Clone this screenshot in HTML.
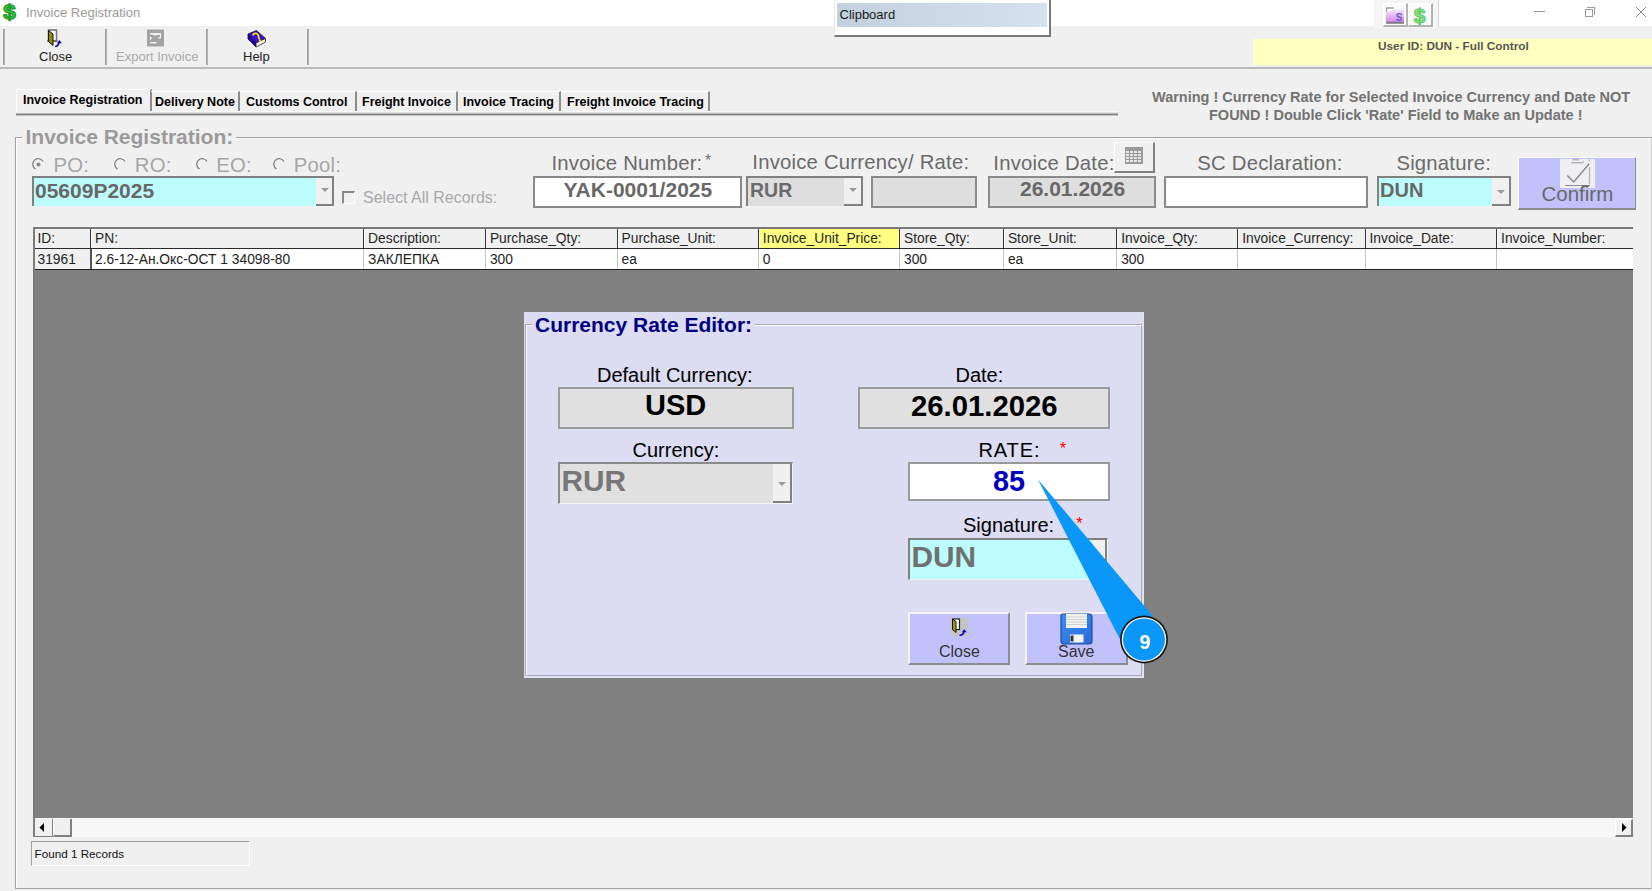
<!DOCTYPE html>
<html><head><meta charset="utf-8">
<style>
*{box-sizing:border-box;margin:0;padding:0}
html,body{width:1652px;height:891px;overflow:hidden;background:#f0f0f0;font-family:"Liberation Sans",sans-serif;position:relative}
.a{position:absolute}
.t{position:absolute;white-space:nowrap;line-height:1}
.sep{position:absolute;width:2px;background:#b0b0b0;border-left:1px solid #a0a0a0}
.tab{position:absolute;top:91px;height:20px;border-top:1px solid #fff;border-right:2px solid #8c8c8c}
.tabt{position:absolute;white-space:nowrap;line-height:1;font-size:12.5px;font-weight:bold;color:#000}
.lbl{position:absolute;white-space:nowrap;line-height:1;font-size:20.3px;color:#6a6a6a;letter-spacing:0.22px}
.box{position:absolute;border:2px solid #8a8a8a}
.gh{position:absolute;top:229px;height:20px;border-right:2px solid #6a6a6a;background:#f0f0f0}
.ght{position:absolute;white-space:nowrap;line-height:1;font-size:13.8px;color:#262626;top:231.5px}
.gdt{position:absolute;white-space:nowrap;line-height:1;font-size:13.8px;color:#222;top:252.5px}
.dl{position:absolute;white-space:nowrap;line-height:1;font-size:20px;color:#000}
.dbox{position:absolute;border:2px solid #9a9a9a;background:#e0e0e0}
.btn{position:absolute;background:#c1c1fc;border-top:2px solid #f4f4f4;border-left:2px solid #f4f4f4;border-right:2px solid #8c8c8c;border-bottom:2px solid #8c8c8c}
</style></head>
<body>
<!-- title bar -->
<div class="a" style="left:0;top:0;width:1652px;height:26px;background:#fff"></div>
<svg class="a" style="left:0;top:0" width="22" height="24" viewBox="0 0 22 24"><text x="9.4" y="18.6" font-family="Liberation Sans" font-weight="bold" font-size="20" fill="#3ad23a" stroke="#1f9a2a" stroke-width="1.3" text-anchor="middle" transform="translate(9.4 0) scale(1.12 1) translate(-9.4 0)">$</text></svg>
<div class="t" style="left:26px;top:6px;font-size:13px;color:#9a9a9a">Invoice Registration</div>


<!-- clipboard popup -->
<div class="a" style="left:834px;top:0;width:217px;height:37px;background:#fff;border-left:1px solid #e8e8e8;border-right:2px solid #7a7a7a;border-bottom:2px solid #7a7a7a"></div>
<div class="a" style="left:837px;top:3px;width:210px;height:24px;background:linear-gradient(90deg,#c3d1df,#d4e2f0)"></div>
<div class="t" style="left:839.5px;top:8px;font-size:13px;color:#1a1a1a">Clipboard</div>
<!-- top right tool icons -->
<div class="a" style="left:1374px;top:0;width:65px;height:28px;background:#f5f5f5;border-right:1px solid #d8d8d8"></div>
<div class="a" style="left:1383px;top:3px;width:25px;height:24px;background:#fbfbfb;border-top:1px solid #fff;border-left:1px solid #fff;border-right:2px solid #b4b4b4;border-bottom:2px solid #b4b4b4"></div>
<div class="a" style="left:1408px;top:3px;width:25px;height:24px;background:#fbfbfb;border-top:1px solid #fff;border-left:1px solid #fff;border-right:2px solid #b4b4b4;border-bottom:2px solid #b4b4b4"></div>
<svg class="a" style="left:1385px;top:5px" width="20" height="20" viewBox="0 0 20 20"><defs><linearGradient id="fg" x1="0" y1="0" x2="0" y2="1"><stop offset="0" stop-color="#f4e4fa"/><stop offset="0.75" stop-color="#dc98ec"/><stop offset="0.85" stop-color="#c080d0"/><stop offset="0.86" stop-color="#8a7a8a"/><stop offset="1" stop-color="#7a7a7a"/></linearGradient></defs><path d="M1.5 3H8.5" stroke="#8a8a8a" stroke-width="1.3"/><path d="M1.5 2.5V7" stroke="#9a9a9a" stroke-width="1.2"/><path d="M1 6.5H7L8 4.5H19V18.7H1Z" fill="url(#fg)"/><text x="14" y="15.5" font-family="Liberation Sans" font-weight="bold" font-size="10" fill="#6a5cc8" text-anchor="middle">S</text></svg>
<svg class="a" style="left:1409px;top:3px" width="22" height="24" viewBox="0 0 22 24"><text x="10.5" y="19.6" font-family="Liberation Sans" font-weight="bold" font-size="21" fill="#8ae68a" stroke="#5ec45e" stroke-width="1" text-anchor="middle">$</text></svg>
<!-- window controls -->
<div class="a" style="left:1534px;top:11px;width:11px;height:1px;background:#999"></div>
<div class="a" style="left:1585px;top:9px;width:8px;height:8px;border:1px solid #9a9a9a"></div>
<div class="a" style="left:1587px;top:7px;width:8px;height:8px;border-top:1px solid #9a9a9a;border-right:1px solid #9a9a9a"></div>
<svg class="a" style="left:1635px;top:6px" width="12" height="12" viewBox="0 0 12 12"><path d="M1 1L11 11M11 1L1 11" stroke="#8a8a8a" stroke-width="1"/></svg>
<!-- toolbar -->
<div class="a" style="left:0;top:67px;width:1652px;height:2px;background:#bababa"></div>
<div class="sep" style="left:3px;top:29px;height:36px"></div>
<div class="sep" style="left:105px;top:29px;height:36px"></div>
<div class="sep" style="left:206px;top:29px;height:36px"></div>
<div class="sep" style="left:307px;top:29px;height:36px"></div>
<div class="t" style="left:39px;top:50px;font-size:13px;color:#222">Close</div>
<div class="t" style="left:116px;top:50px;font-size:13px;color:#a8a8a8">Export Invoice</div>
<div class="t" style="left:243px;top:50px;font-size:13px;color:#222">Help</div>


<!-- toolbar icons -->
<svg class="a" style="left:44px;top:27px" width="22" height="22" viewBox="44 27 22 22">
<rect x="48.5" y="30" width="8" height="11" fill="#fff" stroke="#7a7a7a" stroke-width="1.6"/>
<path d="M47 41H57.5" stroke="#555" stroke-width="1.2"/>
<path d="M48.5 30.5L53 34V45.5L48.5 41.5Z" fill="#8f8c00" stroke="#111" stroke-width="1"/>
<path d="M55.2 46.5Q58 46.5 59 43" fill="none" stroke="#0000a8" stroke-width="1.4"/>
<path d="M57 43.3L59.5 40L61.8 43.3Z" fill="#0000a8"/>
</svg>
<svg class="a" style="left:146px;top:29px" width="19" height="19" viewBox="146 29 19 19">
<rect x="147" y="29.5" width="17" height="17" fill="#a3a3a3"/>
<path d="M150 33.6H161M160.5 33.6V37.8H158M150 33.6L156 35M161 33.6L155.5 35" stroke="#f2f2f2" stroke-width="1.2" fill="none"/>
<path d="M150 36V40.5L152 38.2Z" fill="#f2f2f2"/>
<rect x="150" y="42" width="6.5" height="1.4" fill="#f2f2f2"/>
</svg>
<svg class="a" style="left:246px;top:29px" width="22" height="19" viewBox="246 29 22 19">
<path d="M248 34L256 43L256 47L248 39Z" fill="#2a00c0" stroke="#111" stroke-width="0.8"/>
<path d="M248 34L256.5 30.5L265.5 38.5L256 43Z" fill="#3a10d0" stroke="#111" stroke-width="0.8"/>
<path d="M256 43L265.5 38.5L265.5 42L256 47Z" fill="#fafafa" stroke="#222" stroke-width="0.8"/>
<path d="M253 35.5Q253.5 33 256.5 33.5Q259 34.5 258.5 37L259.5 39.5" fill="none" stroke="#f5e000" stroke-width="1.8"/>
<circle cx="260" cy="40.8" r="1.2" fill="#f5e000"/>
</svg>
<!-- user id -->
<div class="a" style="left:1252.5px;top:39.3px;width:400px;height:25.7px;background:#ffffc0"></div>
<div class="t" style="left:1378px;top:41px;font-size:11.8px;font-weight:bold;color:#555">User ID: DUN - Full Control</div>


<div class="a" style="left:16px;top:111px;width:1102px;height:1px;background:#fafafa"></div><div class="a" style="left:16px;top:112px;width:1102px;height:1px;background:#e4e4e4"></div>
<div class="a" style="left:16px;top:113px;width:1102px;height:1px;background:#b8b8b8"></div>
<div class="a" style="left:16px;top:114px;width:1102px;height:1px;background:#808080"></div><div class="a" style="left:16px;top:115px;width:1102px;height:1px;background:#c4c4c4"></div>
<div class="a" style="left:16px;top:89px;width:136px;height:22px;border-left:1px solid #fff;border-top:1px solid #fff;border-right:2px solid #8c8c8c;background:#f0f0f0"></div><div class="a" style="left:16px;top:111px;width:136px;height:2px;background:#f0f0f0;border-left:1px solid #fff"></div>
<div class="tabt" style="left:23px;top:93.7px">Invoice Registration</div>
<div class="tab" style="left:151px;width:89px"></div>
<div class="tabt" style="left:155px;top:95.7px">Delivery Note</div>
<div class="tab" style="left:240px;width:117px"></div>
<div class="tabt" style="left:246px;top:95.7px">Customs Control</div>
<div class="tab" style="left:357px;width:101px"></div>
<div class="tabt" style="left:362px;top:95.7px">Freight Invoice</div>
<div class="tab" style="left:458px;width:103px"></div>
<div class="tabt" style="left:463px;top:95.7px">Invoice Tracing</div>
<div class="tab" style="left:561px;width:149px"></div>
<div class="tabt" style="left:567px;top:95.7px">Freight Invoice Tracing</div>

<div class="t" style="left:1152px;top:90px;font-size:14.5px;font-weight:bold;color:#727272">Warning ! Currency Rate for Selected Invoice Currency and Date NOT</div>
<div class="t" style="left:1209px;top:107.5px;font-size:14.5px;font-weight:bold;color:#727272">FOUND ! Double Click 'Rate' Field to Make an Update !</div>


<!-- group frame -->
<div class="a" style="left:15px;top:137px;width:1637px;height:752px;border-left:1px solid #a0a0a0;border-top:1px solid #a0a0a0;border-bottom:1px solid #a0a0a0"></div>
<div class="a" style="left:16px;top:138px;width:1636px;height:750px;border-left:1px solid #fff;border-top:1px solid #fff"></div>
<div class="a" style="left:1651px;top:138px;width:1px;height:751px;background:#d0d0d0"></div>
<div class="a" style="left:22px;top:128px;width:214px;height:20px;background:#f0f0f0"></div>
<div class="t" style="left:25.5px;top:126.4px;font-size:21px;font-weight:bold;color:#9a9a9a">Invoice Registration:</div>

<!-- radios -->
<svg class="a" style="left:32px;top:158px" width="13" height="13" viewBox="0 0 13 13"><path d="M11 3.5A5.5 5.5 0 1 0 3.5 11" fill="none" stroke="#777" stroke-width="1.2"/><circle cx="6.5" cy="6.5" r="2" fill="#888"/></svg>
<div class="lbl" style="left:53.5px;top:155.4px;color:#a6a6a6">PO:</div>
<svg class="a" style="left:114px;top:158px" width="13" height="13" viewBox="0 0 13 13"><path d="M11 3.5A5.5 5.5 0 1 0 3.5 11" fill="none" stroke="#777" stroke-width="1.2"/></svg>
<div class="lbl" style="left:134.8px;top:155.4px;color:#a6a6a6">RO:</div>
<svg class="a" style="left:196px;top:158px" width="13" height="13" viewBox="0 0 13 13"><path d="M11 3.5A5.5 5.5 0 1 0 3.5 11" fill="none" stroke="#777" stroke-width="1.2"/></svg>
<div class="lbl" style="left:216.2px;top:155.4px;color:#a6a6a6">EO:</div>
<svg class="a" style="left:273px;top:158px" width="13" height="13" viewBox="0 0 13 13"><path d="M11 3.5A5.5 5.5 0 1 0 3.5 11" fill="none" stroke="#777" stroke-width="1.2"/></svg>
<div class="lbl" style="left:293.8px;top:155.4px;color:#a6a6a6">Pool:</div>

<!-- PO combo -->
<div class="a" style="left:32px;top:176px;width:302px;height:30px;background:#bdfcfc;border-left:2px solid #808080;border-top:2px solid #808080"></div>
<div class="a" style="left:316px;top:178px;width:18px;height:28px;background:#f0f0f0;border-right:2px solid #808080;border-bottom:2px solid #808080"></div>
<svg class="a" style="left:321px;top:188px" width="8" height="5"><path d="M0 0H8L4 4Z" fill="#999"/></svg>
<div class="t" style="left:35px;top:179.7px;font-size:21px;font-weight:bold;color:#686868">05609P2025</div>

<div class="a" style="left:342px;top:191px;width:13px;height:13px;border-left:2px solid #8a8a8a;border-top:2px solid #8a8a8a;border-right:1px solid #fff;border-bottom:1px solid #fff"></div>
<div class="t" style="left:363px;top:190px;font-size:16px;color:#a8a8a8">Select All Records:</div>

<!-- labels -->
<div class="lbl" style="left:551.5px;top:152.6px">Invoice Number:</div>
<div class="t" style="left:705px;top:152.5px;font-size:16px;color:#6e6e6e">*</div>
<div class="lbl" style="left:752.3px;top:152.4px">Invoice Currency/ Rate:</div>
<div class="lbl" style="left:993.3px;top:152.6px">Invoice Date:</div>
<div class="lbl" style="left:1197.3px;top:152.6px">SC Declaration:</div>
<div class="lbl" style="left:1396.4px;top:152.5px">Signature:</div>

<!-- inputs -->
<div class="box" style="left:533px;top:176px;width:209px;height:32px;background:#fff"></div>
<div class="t" style="left:563.5px;top:179.3px;font-size:21px;font-weight:bold;color:#686868">YAK-0001/2025</div>

<div class="a" style="left:746px;top:176px;width:117px;height:30px;background:#dedede;border-left:2px solid #808080;border-top:2px solid #808080"></div>
<div class="a" style="left:844px;top:178px;width:19px;height:28px;background:#f0f0f0;border-right:2px solid #808080;border-bottom:2px solid #808080"></div>
<svg class="a" style="left:849px;top:188px" width="8" height="5"><path d="M0 0H8L4 4Z" fill="#999"/></svg>
<div class="t" style="left:750px;top:181.2px;font-size:19.5px;font-weight:bold;color:#6a6a6a">RUR</div>

<div class="box" style="left:871px;top:176px;width:106px;height:32px;background:#dedede"></div>
<div class="box" style="left:988px;top:175.5px;width:168px;height:32.5px;background:#dedede"></div>
<div class="t" style="left:1020px;top:178.2px;font-size:21px;font-weight:bold;color:#686868">26.01.2026</div>

<div class="a" style="left:1114px;top:142px;width:41px;height:31px;background:#f0f0f0;border-left:1px solid #fff;border-top:1px solid #fff;border-right:2px solid #808080;border-bottom:2px solid #808080"></div>
<svg class="a" style="left:1125px;top:147px" width="18" height="17" viewBox="0 0 18 17"><rect x="0" y="0" width="18" height="17" fill="#9a9a9a"/><g fill="#e8e8e8"><rect x="1" y="4" width="3" height="2"/><rect x="5" y="4" width="3" height="2"/><rect x="9" y="4" width="3" height="2"/><rect x="13" y="4" width="3" height="2"/><rect x="1" y="7" width="3" height="2"/><rect x="5" y="7" width="3" height="2"/><rect x="9" y="7" width="3" height="2"/><rect x="13" y="7" width="3" height="2"/><rect x="1" y="10" width="3" height="2"/><rect x="5" y="10" width="3" height="2"/><rect x="9" y="10" width="3" height="2"/><rect x="13" y="10" width="3" height="2"/><rect x="1" y="13" width="3" height="2"/><rect x="5" y="13" width="3" height="2"/><rect x="9" y="13" width="3" height="2"/><rect x="13" y="13" width="3" height="2"/></g></svg>

<div class="box" style="left:1163.5px;top:175.5px;width:204.5px;height:32px;background:#fff"></div>

<div class="a" style="left:1377px;top:176px;width:134px;height:30px;background:#bdfcfc;border-left:2px solid #808080;border-top:2px solid #808080"></div>
<div class="a" style="left:1492px;top:178px;width:19px;height:28px;background:#f0f0f0;border-right:2px solid #808080;border-bottom:2px solid #808080"></div>
<svg class="a" style="left:1497px;top:190px" width="8" height="5"><path d="M0 0H8L4 4Z" fill="#999"/></svg>
<div class="t" style="left:1380px;top:180.2px;font-size:20px;font-weight:bold;color:#686868">DUN</div>

<div class="btn" style="left:1518px;top:157px;width:118px;height:53px;border-top:1px solid #fafafa;border-left:1px solid #fafafa;border-right:1.5px solid #8c8c8c"></div>
<div class="a" style="left:1560px;top:158.5px;width:35px;height:29.5px;background:#efeff2"></div>
<svg class="a" style="left:1560px;top:158px" width="35" height="30" viewBox="0 0 35 30"><path d="M11 4.8H22.5Q23.5 4.8 23.5 3.3M12.5 1.8H19" fill="none" stroke="#9a9a9a" stroke-width="1"/><path d="M29.3 1.5V3" stroke="#999" stroke-width="1"/><path d="M29.5 9V26.5" stroke="#b4b4b4" stroke-width="1.3"/><path d="M5 27.5H30" stroke="#8c8c8c" stroke-width="1"/><rect x="22.5" y="27.3" width="6" height="1.7" fill="#666"/><path d="M7.3 17.5L13.7 24L29.2 5.8" fill="none" stroke="#8a8a8a" stroke-width="1.5"/></svg>
<div class="t" style="left:1541.5px;top:183.5px;font-size:20.5px;color:#686868">Confirm</div>

<div class="a" style="left:33px;top:227px;width:1600px;height:592px;background:#808080;border-top:2px solid #7a7a7a;border-left:2px solid #7a7a7a"></div>
<div class="a" style="left:35px;top:229px;width:1598px;height:19px;background:#f0f0f0"></div>
<div class="a" style="left:35px;top:248px;width:1598px;height:1px;background:#2a2a2a"></div>
<div class="a" style="left:35px;top:249px;width:1598px;height:20px;background:#fff"></div>
<div class="a" style="left:35px;top:249px;width:55px;height:20px;background:#f0f0f0"></div>
<div class="a" style="left:35px;top:269px;width:1598px;height:1px;background:#222"></div>
<div class="a" style="left:90px;top:229px;width:1px;height:19px;background:#333"></div>
<div class="a" style="left:91px;top:229px;width:1px;height:19px;background:#fafafa"></div>
<div class="a" style="left:90px;top:249px;width:2px;height:20px;background:#555"></div>
<div class="ght" style="left:37.5px">ID:</div>
<div class="gdt" style="left:37.5px">31961</div>
<div class="a" style="left:363px;top:229px;width:1px;height:19px;background:#333"></div>
<div class="a" style="left:364px;top:229px;width:1px;height:19px;background:#fafafa"></div>
<div class="a" style="left:363px;top:249px;width:1px;height:20px;background:#c4c4c4"></div>
<div class="ght" style="left:95.0px">PN:</div>
<div class="gdt" style="left:95.0px">2.6-12-Ан.Окс-ОСТ 1 34098-80</div>
<div class="a" style="left:485px;top:229px;width:1px;height:19px;background:#333"></div>
<div class="a" style="left:486px;top:229px;width:1px;height:19px;background:#fafafa"></div>
<div class="a" style="left:485px;top:249px;width:1px;height:20px;background:#c4c4c4"></div>
<div class="ght" style="left:368.1px">Description:</div>
<div class="gdt" style="left:368.1px">ЗАКЛЕПКА</div>
<div class="a" style="left:617px;top:229px;width:1px;height:19px;background:#333"></div>
<div class="a" style="left:618px;top:229px;width:1px;height:19px;background:#fafafa"></div>
<div class="a" style="left:617px;top:249px;width:1px;height:20px;background:#c4c4c4"></div>
<div class="ght" style="left:489.9px">Purchase_Qty:</div>
<div class="gdt" style="left:489.9px">300</div>
<div class="a" style="left:758px;top:229px;width:1px;height:19px;background:#333"></div>
<div class="a" style="left:759px;top:229px;width:1px;height:19px;background:#fafafa"></div>
<div class="a" style="left:758px;top:249px;width:1px;height:20px;background:#c4c4c4"></div>
<div class="ght" style="left:621.6px">Purchase_Unit:</div>
<div class="gdt" style="left:621.6px">ea</div>
<div class="a" style="left:759.8px;top:229px;width:139.20000000000005px;height:19px;background:#ffff80"></div>
<div class="a" style="left:899px;top:229px;width:1px;height:19px;background:#333"></div>
<div class="a" style="left:900px;top:229px;width:1px;height:19px;background:#fafafa"></div>
<div class="a" style="left:899px;top:249px;width:1px;height:20px;background:#c4c4c4"></div>
<div class="ght" style="left:762.8px">Invoice_Unit_Price:</div>
<div class="gdt" style="left:762.8px">0</div>
<div class="a" style="left:1003px;top:229px;width:1px;height:19px;background:#333"></div>
<div class="a" style="left:1004px;top:229px;width:1px;height:19px;background:#fafafa"></div>
<div class="a" style="left:1003px;top:249px;width:1px;height:20px;background:#c4c4c4"></div>
<div class="ght" style="left:904.0px">Store_Qty:</div>
<div class="gdt" style="left:904.0px">300</div>
<div class="a" style="left:1116px;top:229px;width:1px;height:19px;background:#333"></div>
<div class="a" style="left:1117px;top:229px;width:1px;height:19px;background:#fafafa"></div>
<div class="a" style="left:1116px;top:249px;width:1px;height:20px;background:#c4c4c4"></div>
<div class="ght" style="left:1007.9px">Store_Unit:</div>
<div class="gdt" style="left:1007.9px">ea</div>
<div class="a" style="left:1237px;top:229px;width:1px;height:19px;background:#333"></div>
<div class="a" style="left:1238px;top:229px;width:1px;height:19px;background:#fafafa"></div>
<div class="a" style="left:1237px;top:249px;width:1px;height:20px;background:#c4c4c4"></div>
<div class="ght" style="left:1121.2px">Invoice_Qty:</div>
<div class="gdt" style="left:1121.2px">300</div>
<div class="a" style="left:1365px;top:229px;width:1px;height:19px;background:#333"></div>
<div class="a" style="left:1366px;top:229px;width:1px;height:19px;background:#fafafa"></div>
<div class="a" style="left:1365px;top:249px;width:1px;height:20px;background:#c4c4c4"></div>
<div class="ght" style="left:1242.2px">Invoice_Currency:</div>
<div class="a" style="left:1496px;top:229px;width:1px;height:19px;background:#333"></div>
<div class="a" style="left:1497px;top:229px;width:1px;height:19px;background:#fafafa"></div>
<div class="a" style="left:1496px;top:249px;width:1px;height:20px;background:#c4c4c4"></div>
<div class="ght" style="left:1369.5px">Invoice_Date:</div>
<div class="ght" style="left:1501.1px">Invoice_Number:</div>
<div class="a" style="left:33px;top:818px;width:1600px;height:19px;background:#f7f7f7;border-left:2px solid #808080"></div>
<div class="a" style="left:35px;top:819px;width:18px;height:18px;background:#f0f0f0;border-right:1px solid #808080;border-bottom:1px solid #808080"></div>
<svg class="a" style="left:39px;top:823px" width="8" height="9"><path d="M5 0V9L0.5 4.5Z" fill="#000"/></svg>
<div class="a" style="left:53px;top:819px;width:19px;height:18px;background:#f0f0f0;border-right:2px solid #808080;border-bottom:2px solid #808080;border-left:1px solid #fff"></div>
<div class="a" style="left:1615px;top:819px;width:18px;height:18px;background:#f0f0f0;border-right:2px solid #808080;border-bottom:2px solid #808080;border-left:1px solid #fff;border-top:1px solid #fff"></div>
<svg class="a" style="left:1621px;top:823px" width="8" height="9"><path d="M1 0V9L5.5 4.5Z" fill="#000"/></svg>
<div class="a" style="left:31px;top:841px;width:219px;height:25px;border-top:1px solid #a0a0a0;border-left:1px solid #a0a0a0;border-bottom:1px solid #fff;border-right:1px solid #fff"></div>
<div class="t" style="left:34.5px;top:847.7px;font-size:11.7px;color:#111">Found 1 Records</div>

<div class="a" style="left:524px;top:312px;width:620px;height:366px;background:#dcdcf2;border-right:1px solid #e4e4ec;border-bottom:1px solid #e4e4ec"></div>
<div class="a" style="left:525px;top:324px;width:617px;height:352px;border-left:1px solid #a8a8ac;border-top:1px solid #a8a8ac"></div>
<div class="a" style="left:526px;top:325px;width:616px;height:351px;border-left:1px solid #fff;border-top:1px solid #fff;border-right:1px solid #a8a8b8;border-bottom:1px solid #a8a8b8"></div>
<div class="a" style="left:532px;top:316px;width:222.5px;height:18px;background:#dcdcf2"></div>
<div class="t" style="left:535px;top:314.3px;font-size:21px;font-weight:bold;color:#000080">Currency Rate Editor:</div>

<div class="dl" style="left:597px;top:364.6px">Default Currency:</div>
<div class="dbox" style="left:558px;top:387px;width:236px;height:42px"></div>
<div class="t" style="left:645px;top:391.1px;font-size:29px;font-weight:bold;color:#000">USD</div>

<div class="dl" style="left:955.5px;top:364.6px">Date:</div>
<div class="dbox" style="left:858px;top:387px;width:252px;height:42px"></div>
<div class="t" style="left:911px;top:391.4px;font-size:29.3px;font-weight:bold;color:#000">26.01.2026</div>

<div class="dl" style="left:632.5px;top:440px">Currency:</div>
<div class="a" style="left:558px;top:462px;width:235px;height:42px;background:#e0e0e0;border-left:2px solid #8a8a8a;border-top:2px solid #8a8a8a;border-right:1px solid #f4f4f4;border-bottom:1px solid #f4f4f4"></div>
<div class="a" style="left:773px;top:464px;width:19px;height:39px;background:#f0f0f0;border-right:2px solid #808080;border-bottom:2px solid #808080"></div>
<svg class="a" style="left:778px;top:482px" width="8" height="5"><path d="M0 0H8L4 4Z" fill="#999"/></svg>
<div class="t" style="left:561.5px;top:466px;font-size:29.8px;font-weight:bold;color:#777">RUR</div>

<div class="dl" style="left:978.5px;top:440px;letter-spacing:0.9px">RATE:</div>
<div class="t" style="left:1059.8px;top:439.6px;font-size:16.5px;color:#f00">*</div>
<div class="a" style="left:908px;top:462px;width:202px;height:39px;background:#fff;border:2px solid #9a9a9a"></div>
<div class="t" style="left:993px;top:466.8px;font-size:28.8px;font-weight:bold;color:#0000c0">85</div>

<div class="dl" style="left:963px;top:514.5px">Signature:</div>
<div class="t" style="left:1076.3px;top:515px;font-size:16.5px;color:#f00">*</div>
<div class="a" style="left:908px;top:537.5px;width:200px;height:42.5px;background:#bdfcfc;border-left:2px solid #808080;border-top:2px solid #808080;border-right:1px solid #f4f4f4;border-bottom:1px solid #f4f4f4"></div>
<div class="a" style="left:1093px;top:539.5px;width:14px;height:39px;background:#f0f0f0;border-right:2px solid #808080;border-bottom:2px solid #808080"></div>
<div class="t" style="left:911.5px;top:542.4px;font-size:29.8px;font-weight:bold;color:#707070">DUN</div>

<div class="btn" style="left:908px;top:612px;width:102px;height:53px"></div>
<div class="t" style="left:939px;top:644px;font-size:16px;color:#333">Close</div>
<div class="btn" style="left:1025px;top:612px;width:103px;height:53px"></div>
<div class="t" style="left:1058px;top:644px;font-size:16px;color:#333">Save</div>

<div class="a" style="left:950.5px;top:618px;width:17px;height:18px;background:#c4c4c4"></div>
<svg class="a" style="left:950px;top:617px" width="19" height="20" viewBox="0 0 19 20">
<rect x="3" y="2" width="6.5" height="10.5" fill="#fff" stroke="#222" stroke-width="1.2"/>
<path d="M2.5 2L6 4.5V15.5L2.5 12.5Z" fill="#a09a00" stroke="#111" stroke-width="1"/>
<path d="M9.5 18.3Q13 18.5 14 15" fill="none" stroke="#0000c0" stroke-width="1.4"/>
<path d="M11.8 15.3L14.3 12.3L16.6 15.3Z" fill="#0000c0"/>
</svg>
<svg class="a" style="left:1060px;top:613px" width="34" height="32" viewBox="0 0 34 32">
<defs><linearGradient id="flp" x1="0" y1="0" x2="1" y2="1"><stop offset="0" stop-color="#3a8ef0"/><stop offset="1" stop-color="#2a6cd8"/></linearGradient></defs>
<path d="M3 1H29Q32 1 32 4V28Q32 31 29 31H4Q1 31 1 28V3Q1 1 3 1Z" fill="url(#flp)" stroke="#1d4fa8" stroke-width="1.2"/>
<rect x="6" y="1" width="21" height="14" fill="#f2f2f2"/>
<g stroke="#c8c8c8" stroke-width="0.8"><path d="M6 4H27M6 6.5H27M6 9H27M6 11.5H27"/></g>
<rect x="10" y="21.5" width="13.5" height="8" fill="#f4f4f4"/>
<rect x="10.5" y="22.5" width="3" height="6" fill="#333"/>
</svg>



<svg class="a" style="left:0;top:0" width="1652" height="891" viewBox="0 0 1652 891">
<path d="M1038 479.4L1152.8 616L1119.8 639Z" fill="#0a97f8"/>
<circle cx="1144" cy="639.5" r="23.9" fill="#111"/>
<circle cx="1144" cy="639.5" r="22.3" fill="#fff"/>
<circle cx="1144" cy="639.5" r="21" fill="#0a97f8"/>
<text x="1145" y="648.7" font-family="Liberation Sans" font-weight="bold" font-size="19.5" fill="#fff" text-anchor="middle">9</text>
</svg>

</body></html>
